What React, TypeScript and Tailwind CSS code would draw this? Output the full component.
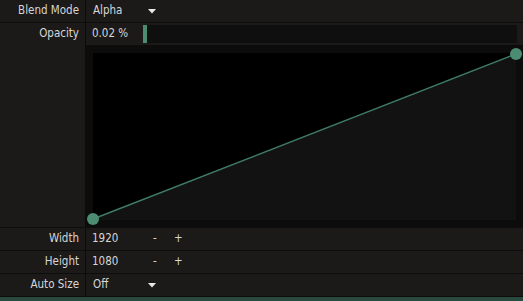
import React from 'react';

const font = { fontFamily: '"DejaVu Sans Condensed", "DejaVu Sans", Verdana, sans-serif' };

const Caret = () => (
  <svg width="8" height="5" viewBox="0 0 8 5" className="ml-auto">
    <path d="M0 0 H8 L4 4.5 Z" fill="#e8e8e8" />
  </svg>
);

const Label = ({ text }: { text: string }) => (
  <div className="w-[86px] shrink-0 border-r border-[#0b0b0b] pr-[6px] text-right h-full flex items-start justify-end">
    <span className="h-[22px] flex items-center">{text}</span>
  </div>
);

const DropdownRow = ({ label, value }: { label: string; value: string }) => (
  <div className="flex h-[23px] border-b border-[#0d0d0d]">
    <Label text={label} />
    <div className="flex items-center pl-[7px] w-[70px]">
      <span>{value}</span>
      <Caret />
    </div>
  </div>
);

const StepperRow = ({ label, value }: { label: string; value: string }) => (
  <div className="flex h-[23px] border-b border-[#0d0d0d]">
    <Label text={label} />
    <div className="flex items-center pl-[6px]">
      <span className="w-[61px]">{value}</span>
      <span className="w-[21px]">-</span>
      <span>+</span>
    </div>
  </div>
);

const CurveEditor = () => (
  <div className="flex-1 bg-[#0c0c0c] pl-[7px] pr-[7px] pt-[8px] pb-[7px] flex">
    <div className="relative flex-1 bg-black">
      <svg className="absolute inset-0 w-full h-full overflow-visible" viewBox="0 0 422 167" preserveAspectRatio="none">
        <path d="M0 166 L422 1 L422 167 L0 167 Z" fill="#121212" />
        <line x1="0" y1="166" x2="422" y2="1" stroke="#3f7d66" strokeWidth="1.4" />
        <circle cx="0" cy="166" r="6" fill="#4b8c73" />
        <circle cx="422" cy="1" r="6" fill="#4b8c73" />
      </svg>
    </div>
  </div>
);

export default function App() {
  return (
    <div className="w-[523px] h-[301px] bg-[#1b1a19] text-[#d6d6d6] text-[11.5px] flex flex-col overflow-hidden" style={font}>
      <DropdownRow label="Blend Mode" value="Alpha" />
      <div className="flex h-[205px] border-b border-[#0d0d0d]">
        <Label text="Opacity" />
        <div className="flex-1 flex flex-col">
          <div className="h-[22px] flex items-center pl-[6px] pr-[6px]">
            <span className="w-[51px]">0.02 %</span>
            <div className="flex-1 h-[18px] bg-[#0f0f0f] flex">
              <div className="w-[4px] h-full bg-[#4b8c73]" />
            </div>
          </div>
          <CurveEditor />
        </div>
      </div>
      <StepperRow label="Width" value="1920" />
      <StepperRow label="Height" value="1080" />
      <DropdownRow label="Auto Size" value="Off" />
      <div className="flex-1 bg-[#2a4a3f]" />
    </div>
  );
}
